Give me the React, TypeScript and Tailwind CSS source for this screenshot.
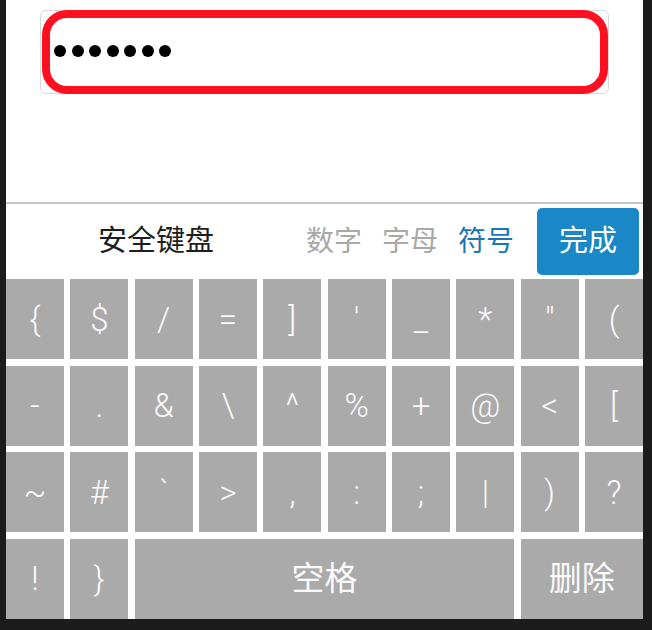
const rows: string[][] = [
  ['{', '$', '/', '=', ']', "'", '_', '*', '"', '('],
  ['-', '.', '&', '\\', '^', '%', '+', '@', '<', '['],
  ['~', '#', '`', '>', ',', ':', ';', '|', ')', '?'],
];

function Key({ label, className = 'font-light' }: { label: string; className?: string }) {
  return (
    <div
      className={`flex items-center justify-center bg-[#aaaaaa] text-[#fafafa] text-[33px] leading-none ${className}`}
    >
      {label}
    </div>
  );
}

export default function App() {
  return (
    <div className="w-[652px] h-[630px] bg-[#1b1b1b] pl-[6px] font-['Roboto','Noto_Sans_CJK_SC',sans-serif]">
      <div className="w-[637px] h-[619px] bg-white flex flex-col">
        {/* Password field */}
        <div className="h-[202px] pt-[10px] pl-[34px]">
          <div className="w-[569px] h-[84px] border border-[#d9d9d9] rounded-[6px] flex">
            <div className="flex-1 -my-px ml-px border-[8px] border-[#ff0f1f] rounded-[25px] flex items-center gap-[5.5px] pl-[4px] pb-[3px]">
              {Array.from({ length: 7 }).map((_, i) => (
                <span key={i} className="w-[12px] h-[12px] rounded-full bg-black" />
              ))}
            </div>
          </div>
        </div>

        <div className="h-[2px] bg-[#c6c6c6]" />

        {/* Toolbar */}
        <div className="h-[75px] flex items-center text-[28px] leading-none whitespace-nowrap">
          <div className="flex-1 text-center text-[#1e1e1e] text-[29px]">安全键盘</div>
          <div className="w-[56px] shrink-0 text-[#a8a8a8] mr-[20px]">数字</div>
          <div className="w-[56px] shrink-0 text-[#a8a8a8] mr-[20px]">字母</div>
          <div className="w-[56px] shrink-0 text-[#1c76b5]">符号</div>
          <button className="ml-[23px] mr-[4px] w-[102px] h-[67px] shrink-0 rounded-[5px] bg-[#1a87c6] text-white text-[29px] flex items-center justify-center">
            完成
          </button>
        </div>

        {/* Keys */}
        <div className="grid grid-cols-10 grid-rows-[repeat(4,80px)] gap-x-[6.33px] gap-y-[6.67px]">
          {rows.flat().map((k, i) => (
            <Key key={i} label={k} />
          ))}
          <Key label="!" />
          <Key label="}" />
          <Key label="空格" className="col-span-6 font-normal" />
          <Key label="删除" className="col-span-2 font-normal" />
        </div>
      </div>
    </div>
  );
}
